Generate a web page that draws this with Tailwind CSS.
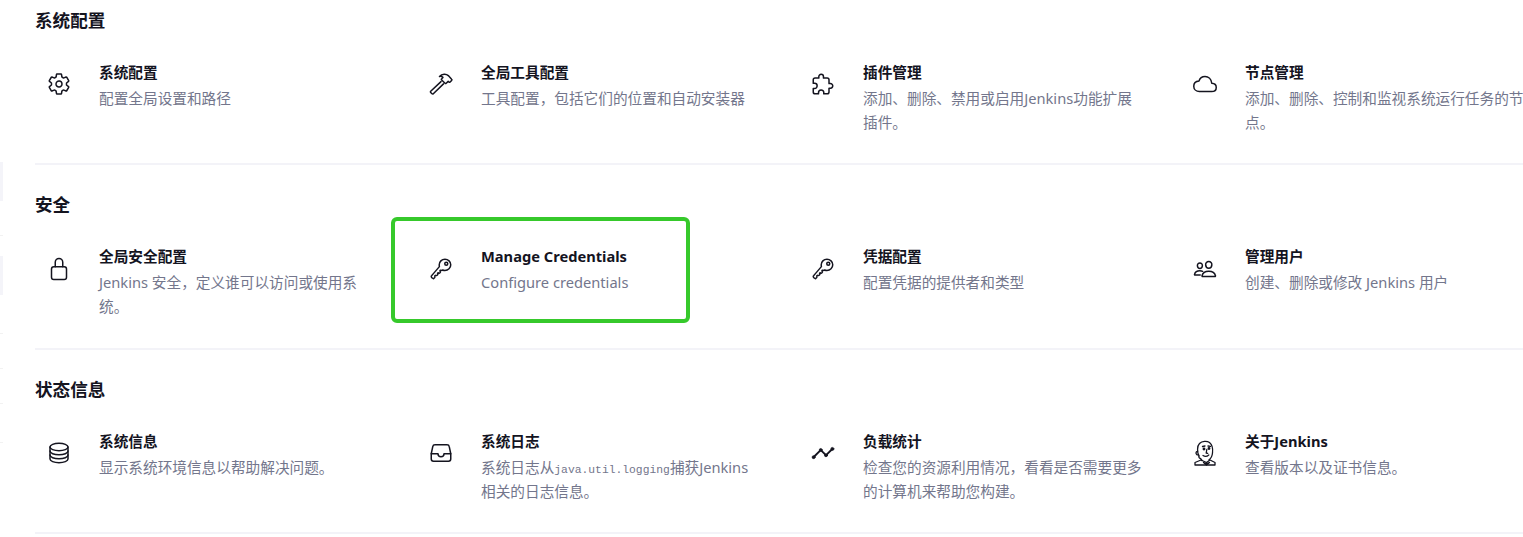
<!DOCTYPE html>
<html lang="zh-CN">
<head>
    <meta charset="UTF-8">
    <meta name="viewport" content="width=device-width, initial-scale=1.0">
    <title>系统管理</title>
    <script src="https://cdn.jsdelivr.net/npm/@tailwindcss/browser@4"></script>
</head>
<body class="relative h-[537px] overflow-hidden bg-white font-['Noto_Sans','Noto_Sans_CJK_SC',sans-serif] text-[#14141f]">
    <!-- cropped side panel leftovers on the left edge -->
    <aside class="absolute top-0 left-0 h-full w-[3px]">
        <span class="absolute top-[162px] h-[39px] w-full bg-[#f4f4f9]"></span>
        <span class="absolute top-[235px] h-px w-full bg-[#f2f2f2]"></span>
        <span class="absolute top-[256px] h-[39px] w-full bg-[#f4f4f9]"></span>
        <span class="absolute top-[333px] h-px w-full bg-[#f2f2f2]"></span>
        <span class="absolute top-[368px] h-px w-full bg-[#f2f2f2]"></span>
        <span class="absolute top-[403px] h-px w-full bg-[#f2f2f2]"></span>
        <span class="absolute top-[442px] h-px w-full bg-[#f2f2f2]"></span>
    </aside>

    <main class="w-[1560px] pl-[35px] pt-[4.5px]">

        <section class="mb-[24px]">
            <h2 class="h-[30px] text-[17.6px] leading-[30px] font-bold">系统配置</h2>
            <div class="mt-[26px] grid h-[104.5px] grid-cols-[repeat(4,382px)] border-b-2 border-[#f3f3f8]">
                <a class="flex">
                    <span class="flex h-[47px] w-[48px] items-center justify-center">
                        <svg class="h-6 w-6" viewBox="0 0 512 512" fill="none" stroke="currentColor" stroke-width="32" stroke-linecap="round" stroke-linejoin="round"><path d="M262.29 192.31a64 64 0 1057.4 57.4 64.13 64.13 0 00-57.4-57.4zM416.39 256a154.34 154.34 0 01-1.53 20.79l45.21 35.46a10.81 10.81 0 012.45 13.75l-42.77 74a10.81 10.81 0 01-13.14 4.59l-44.9-18.08a16.11 16.11 0 00-15.17 1.75A164.48 164.48 0 01325 400.8a15.94 15.94 0 00-8.82 12.14l-6.73 47.89a11.08 11.08 0 01-10.68 9.17h-85.54a11.11 11.11 0 01-10.69-8.87l-6.72-47.82a16.07 16.07 0 00-9-12.22 155.3 155.3 0 01-21.46-12.57 16 16 0 00-15.11-1.71l-44.89 18.07a10.81 10.81 0 01-13.14-4.58l-42.77-74a10.8 10.8 0 012.45-13.75l38.21-30a16.05 16.05 0 006-14.08c-.36-4.17-.58-8.33-.58-12.5s.21-8.27.58-12.35a16 16 0 00-6.07-13.94l-38.19-30A10.81 10.81 0 0149.48 186l42.77-74a10.81 10.81 0 0113.14-4.59l44.9 18.08a16.11 16.11 0 0015.17-1.75A164.48 164.48 0 01187 111.2a15.94 15.94 0 008.82-12.14l6.73-47.89A11.08 11.08 0 01213.23 42h85.54a11.11 11.11 0 0110.69 8.87l6.72 47.82a16.07 16.07 0 009 12.22 155.3 155.3 0 0121.46 12.57 16 16 0 0015.11 1.71l44.89-18.07a10.81 10.81 0 0113.14 4.58l42.77 74a10.8 10.8 0 01-2.45 13.75l-38.21 30a16.05 16.05 0 00-6.05 14.08c.33 4.14.55 8.3.55 12.47z"/></svg>
                    </span>
                    <div class="ml-4 w-[280px]">
                        <h3 class="text-[14.67px] leading-[22px] font-bold">系统配置</h3>
                        <p class="mt-[3px] text-[14.67px] leading-[24px] text-[#73768c]">配置全局设置和路径</p>
                    </div>
                </a>
                <a class="flex">
                    <span class="flex h-[47px] w-[48px] items-center justify-center">
                        <svg class="h-6 w-6" viewBox="0 0 24 24" fill="none" stroke="currentColor" stroke-width="1.5" stroke-linecap="round" stroke-linejoin="round"><path d="M12 9.600 1.700 19.200a.9.900 0 0 0 0 1.300l1.300 1.300a.9.900 0 0 0 1.300 0L14.500 11.900"/><path d="M10.500 4.500c2.500-3 6.800-2.900 8.800-.9l3.300 3.600c.4.400.4.800 0 1.200l-1.500 1.600c-.4.400-.8.400-1.200 0l-.7-.6-2 1.900c-.4.400-.8.400-1.200 0l-3.300-3.300c-.4-.4-.4-.8 0-1.200l1.200-1.400c-.9-.9-2.300-1.300-3.400-.9z"/></svg>
                    </span>
                    <div class="ml-4 w-[280px]">
                        <h3 class="text-[14.67px] leading-[22px] font-bold">全局工具配置</h3>
                        <p class="mt-[3px] text-[14.67px] leading-[24px] text-[#73768c]">工具配置，包括它们的位置和自动安装器</p>
                    </div>
                </a>
                <a class="flex">
                    <span class="flex h-[47px] w-[48px] items-center justify-center">
                        <svg class="h-6 w-6" viewBox="0 0 512 512" fill="none" stroke="currentColor" stroke-width="32" stroke-linecap="round" stroke-linejoin="round"><path d="M413.66 246.1H386a2 2 0 01-2-2v-77.24A38.86 38.86 0 00345.14 128H267.9a2 2 0 01-2-2V98.34c0-27.14-21.5-49.86-48.64-50.33a49.53 49.53 0 00-50.4 49.51V126a2 2 0 01-2 2H87.62A39.74 39.74 0 0048 167.62V238a2 2 0 002 2h26.91c29.37 0 53.68 25.48 54.09 54.85.42 29.87-23.51 57.15-53.29 57.15H50a2 2 0 00-2 2v70.38A39.74 39.74 0 0087.62 464H158a2 2 0 002-2v-20.93c0-30.28 24.75-56.35 55-57.06 30.1-.7 57 20.31 57 50.28V462a2 2 0 002 2h71.14A38.86 38.86 0 00384 425.14v-78a2 2 0 012-2h28.48c27.63 0 49.52-22.67 49.52-50.4s-23.2-48.64-50.34-48.64z"/></svg>
                    </span>
                    <div class="ml-4 w-[280px]">
                        <h3 class="text-[14.67px] leading-[22px] font-bold">插件管理</h3>
                        <p class="mt-[3px] text-[14.67px] leading-[24px] text-[#73768c]">添加、删除、禁用或启用Jenkins功能扩展插件。</p>
                    </div>
                </a>
                <a class="flex">
                    <span class="flex h-[47px] w-[48px] items-center justify-center">
                        <svg class="h-6 w-6" viewBox="0 0 512 512" fill="none" stroke="currentColor" stroke-width="32" stroke-linecap="round" stroke-linejoin="round"><path d="M400 240c-8.89-89.54-71-144-144-144-69 0-113.44 48.2-128 96-60 6-112 43.59-112 112 0 66 54 112 120 112h260c55 0 100-27.44 100-88 0-59.82-53-85.76-96-88z"/></svg>
                    </span>
                    <div class="ml-4 w-[280px]">
                        <h3 class="text-[14.67px] leading-[22px] font-bold">节点管理</h3>
                        <p class="mt-[3px] text-[14.67px] leading-[24px] text-[#73768c]">添加、删除、控制和监视系统运行任务的节点。</p>
                    </div>
                </a>
            </div>
        </section>

        <section class="mb-[24px]">
            <h2 class="h-[30px] text-[17.6px] leading-[30px] font-bold">安全</h2>
            <div class="mt-[26px] grid h-[104.5px] grid-cols-[repeat(4,382px)] border-b-2 border-[#f3f3f8]">
                <a class="flex">
                    <span class="flex h-[47px] w-[48px] items-center justify-center">
                        <svg class="h-6 w-6" viewBox="0 0 512 512" fill="none" stroke="currentColor" stroke-width="32" stroke-linecap="round" stroke-linejoin="round"><path d="M336 208v-95a80 80 0 00-160 0v95"/><rect x="96" y="208" width="320" height="272" rx="48" ry="48"/></svg>
                    </span>
                    <div class="ml-4 w-[280px]">
                        <h3 class="text-[14.67px] leading-[22px] font-bold">全局安全配置</h3>
                        <p class="mt-[3px] text-[14.67px] leading-[24px] text-[#73768c]">Jenkins 安全，定义谁可以访问或使用系统。</p>
                    </div>
                </a>
                <a class="relative flex">
                    <!-- green highlight drawn over the tile -->
                    <span class="absolute top-[-28px] left-[-26px] h-[106px] w-[299px] rounded-[6px] border-4 border-[#36c92b]"></span>
                    <span class="flex h-[47px] w-[48px] items-center justify-center">
                        <svg class="h-6 w-6" viewBox="0 0 512 512" fill="none" stroke="currentColor" stroke-width="32" stroke-linecap="round" stroke-linejoin="round"><path d="M218.1 167.17c0 13 0 25.6 4.1 37.4-43.1 50.6-156.9 184.3-167.5 194.5a20.17 20.17 0 00-6.7 15c0 8.5 5.2 16.7 9.6 21.3 6.6 6.9 34.8 33 40 28 15.4-15 18.5-19 24.8-25.2 9.5-9.3-1-28.3 2.3-36s6.8-9.2 12.5-10.4 15.8 2.9 23.7 3c8.3.1 12.8-3.4 19-9.2 5-4.6 8.6-8.9 8.7-15.6.2-9-12.8-20.9-3.1-30.4s23.7 6.2 34 5 22.8-15.5 24.1-21.6-11.7-21.8-9.7-30.7c.7-3 6.8-10 11.4-11s25 6.9 29.6 5.9c5.6-1.2 12.1-7.1 17.4-10.4 15.5 6.7 29.6 9.4 47.7 9.4 68.5 0 124-53.4 124-119.2S408.5 48 340 48s-121.9 53.37-121.9 119.17zM400 144a32 32 0 11-32-32 32 32 0 0132 32z"/></svg>
                    </span>
                    <div class="ml-4 w-[280px]">
                        <h3 class="text-[14.67px] leading-[22px] font-bold">Manage Credentials</h3>
                        <p class="mt-[3px] text-[14.67px] leading-[24px] text-[#73768c]">Configure credentials</p>
                    </div>
                </a>
                <a class="flex">
                    <span class="flex h-[47px] w-[48px] items-center justify-center">
                        <svg class="h-6 w-6" viewBox="0 0 512 512" fill="none" stroke="currentColor" stroke-width="32" stroke-linecap="round" stroke-linejoin="round"><path d="M218.1 167.17c0 13 0 25.6 4.1 37.4-43.1 50.6-156.9 184.3-167.5 194.5a20.17 20.17 0 00-6.7 15c0 8.5 5.2 16.7 9.6 21.3 6.6 6.9 34.8 33 40 28 15.4-15 18.5-19 24.8-25.2 9.5-9.3-1-28.3 2.3-36s6.8-9.2 12.5-10.4 15.8 2.9 23.7 3c8.3.1 12.8-3.4 19-9.2 5-4.6 8.6-8.9 8.7-15.6.2-9-12.8-20.9-3.1-30.4s23.7 6.2 34 5 22.8-15.5 24.1-21.6-11.7-21.8-9.7-30.7c.7-3 6.8-10 11.4-11s25 6.9 29.6 5.9c5.6-1.2 12.1-7.1 17.4-10.4 15.5 6.7 29.6 9.4 47.7 9.4 68.5 0 124-53.4 124-119.2S408.5 48 340 48s-121.9 53.37-121.9 119.17zM400 144a32 32 0 11-32-32 32 32 0 0132 32z"/></svg>
                    </span>
                    <div class="ml-4 w-[280px]">
                        <h3 class="text-[14.67px] leading-[22px] font-bold">凭据配置</h3>
                        <p class="mt-[3px] text-[14.67px] leading-[24px] text-[#73768c]">配置凭据的提供者和类型</p>
                    </div>
                </a>
                <a class="flex">
                    <span class="flex h-[47px] w-[48px] items-center justify-center">
                        <svg class="h-6 w-6" viewBox="0 0 512 512" fill="none" stroke="currentColor" stroke-width="32" stroke-linecap="round" stroke-linejoin="round"><path d="M402 168c-2.93 40.67-33.1 72-66 72s-63.12-31.32-66-72c-3-42.31 26.37-72 66-72s69 30.46 66 72z"/><path d="M336 304c-65.17 0-127.84 32.37-143.54 95.41-2.08 8.34 3.15 16.59 11.72 16.59h263.65c8.57 0 13.77-8.25 11.72-16.59C463.85 335.36 401.18 304 336 304z"/><path d="M200 185.94c-2.34 32.48-26.72 58.06-53 58.06s-50.7-25.57-53-58.06C91.61 152.15 115.34 128 147 128s55.39 24.77 53 57.94z"/><path d="M206 306c-18.05-8.27-37.93-11.45-59-11.45-52 0-102.1 25.85-114.65 76.2-1.65 6.66 2.53 13.25 9.37 13.25H154"/></svg>
                    </span>
                    <div class="ml-4 w-[280px]">
                        <h3 class="text-[14.67px] leading-[22px] font-bold">管理用户</h3>
                        <p class="mt-[3px] text-[14.67px] leading-[24px] text-[#73768c]">创建、删除或修改 Jenkins 用户</p>
                    </div>
                </a>
            </div>
        </section>

        <section>
            <h2 class="h-[30px] text-[17.6px] leading-[30px] font-bold">状态信息</h2>
            <div class="mt-[26px] grid h-[104.5px] grid-cols-[repeat(4,382px)] border-b-2 border-[#f3f3f8]">
                <a class="flex">
                    <span class="flex h-[47px] w-[48px] items-center justify-center">
                        <svg class="h-6 w-6" viewBox="0 0 512 512" fill="none" stroke="currentColor" stroke-width="32" stroke-linecap="round" stroke-linejoin="round"><ellipse cx="256" cy="128" rx="192" ry="80"/><path d="M448 214c0 44.18-86 80-192 80S64 258.18 64 214"/><path d="M448 300c0 44.18-86 80-192 80S64 344.18 64 300"/><path d="M64 127.24v257.52C64 428.52 150 464 256 464s192-35.48 192-79.24V127.24"/></svg>
                    </span>
                    <div class="ml-4 w-[280px]">
                        <h3 class="text-[14.67px] leading-[22px] font-bold">系统信息</h3>
                        <p class="mt-[3px] text-[14.67px] leading-[24px] text-[#73768c]">显示系统环境信息以帮助解决问题。</p>
                    </div>
                </a>
                <a class="flex">
                    <span class="flex h-[47px] w-[48px] items-center justify-center">
                        <svg class="h-6 w-6" viewBox="0 0 512 512" fill="none" stroke="currentColor" stroke-width="32" stroke-linecap="round" stroke-linejoin="round"><path d="M384 80H128c-26 0-43 14-48 40L48 272v112a48.14 48.14 0 0048 48h320a48.14 48.14 0 0048-48V272l-32-152c-5-27-23-40-48-40z"/><path d="M48 272h144M320 272h144M192 272a64 64 0 00128 0"/></svg>
                    </span>
                    <div class="ml-4 w-[280px]">
                        <h3 class="text-[14.67px] leading-[22px] font-bold">系统日志</h3>
                        <p class="mt-[3px] text-[14.67px] leading-[24px] text-[#73768c]">系统日志从<code class="font-['Liberation_Mono','Noto_Sans_CJK_SC',monospace] text-[11.33px] leading-none">java.util.logging</code>捕获Jenkins相关的日志信息。</p>
                    </div>
                </a>
                <a class="flex">
                    <span class="flex h-[47px] w-[48px] items-center justify-center">
                        <svg class="h-6 w-6" viewBox="0 0 512 512" fill="currentColor" stroke="currentColor" stroke-width="40" stroke-linecap="round" stroke-linejoin="round"><path fill="none" d="M344 280l88-88M232 216l64 64M80 320l104-104"/><circle cx="456" cy="168" r="32" stroke-width="16"/><circle cx="320" cy="304" r="32" stroke-width="16"/><circle cx="208" cy="192" r="32" stroke-width="16"/><circle cx="56" cy="344" r="32" stroke-width="16"/></svg>
                    </span>
                    <div class="ml-4 w-[280px]">
                        <h3 class="text-[14.67px] leading-[22px] font-bold">负载统计</h3>
                        <p class="mt-[3px] text-[14.67px] leading-[24px] text-[#73768c]">检查您的资源利用情况，看看是否需要更多的计算机来帮助您构建。</p>
                    </div>
                </a>
                <a class="flex">
                    <span class="flex h-[47px] w-[48px] items-center justify-center">
                        <svg class="h-[26px] w-[24px]" viewBox="0 0 24 26" fill="none" stroke="currentColor" stroke-width="1.3" stroke-linecap="round" stroke-linejoin="round"><path d="M6 16C4 12 4 6 6.500 3.500 9 1 14 .8 16.500 2.500 19 4.500 20 9 19.500 13c-.3 3-1.500 5.500-3.500 6.800"/><path d="M6 16c-.5 1 .3 2.300 1.500 2.500l1.500 2"/><path d="M4.500 11.500c-1.500-.3-2 2-.8 3 .6.500 1.300.4 1.800 0"/><circle cx="11" cy="9" r=".8" fill="currentColor"/><circle cx="16" cy="8.500" r=".8" fill="currentColor"/><path d="M9.500 6.500 12 6M15 6l2.500.3M13.800 9.500l-.6 3.500 1.500.3M10 15.500c1.500 1 4 1 5.800-.5"/><path d="M8 20 2 22.500V25h20v-2.500L17 20l-3.500 2.500z"/><path d="M10.500 22.500 13.500 25l3-2.500" fill="currentColor"/></svg>
                    </span>
                    <div class="ml-4 w-[280px]">
                        <h3 class="text-[14.67px] leading-[22px] font-bold">关于Jenkins</h3>
                        <p class="mt-[3px] text-[14.67px] leading-[24px] text-[#73768c]">查看版本以及证书信息。</p>
                    </div>
                </a>
            </div>
        </section>
    </main>
</body>
</html>
